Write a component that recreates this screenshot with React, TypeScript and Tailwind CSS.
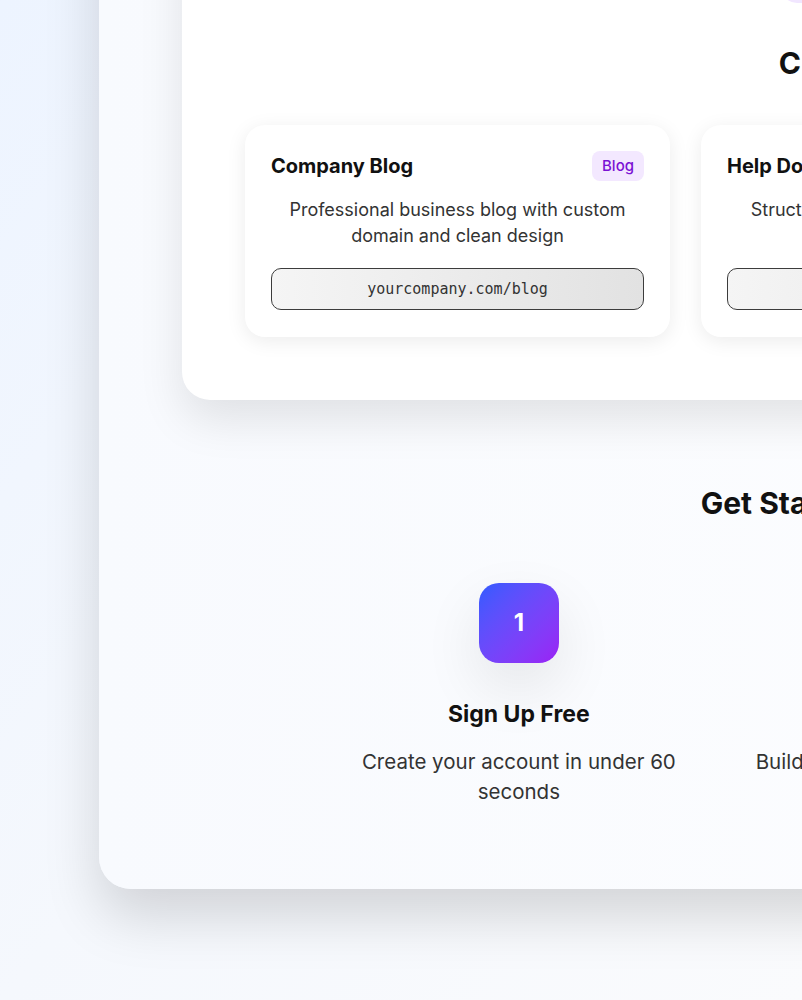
import React from 'react';

type Template = { title: string; tag: string; desc: string; url: string };
type Step = { num: number; title: string; desc: string };

const templates: Template[] = [
  {
    title: 'Company Blog',
    tag: 'Blog',
    desc: 'Professional business blog with custom domain and clean design',
    url: 'yourcompany.com/blog',
  },
  {
    title: 'Help Docs',
    tag: 'Docs',
    desc: 'Structured documentation with search functionality',
    url: 'docs.yourcompany.com',
  },
  {
    title: 'Portfolio',
    tag: 'Portfolio',
    desc: 'Showcase your work with a stunning personal portfolio',
    url: 'yourname.com',
  },
];

const steps: Step[] = [
  { num: 1, title: 'Sign Up Free', desc: 'Create your account in under 60 seconds' },
  { num: 2, title: 'Build It', desc: 'Build your website with powerful design tools' },
  { num: 3, title: 'Go Live', desc: 'Publish instantly and share it with the world' },
];

const TemplateCard = ({ item }: { item: Template }) => (
  <div className="flex flex-col rounded-[20px] bg-white p-[26px] pb-[27px] shadow-[0_4px_20px_rgba(0,0,0,0.08)]">
    <div className="flex items-center justify-between">
      <h3 className="text-xl font-bold text-[#111]">{item.title}</h3>
      <span className="rounded-lg bg-[#f3e8ff] px-2.5 py-1 text-[15px] leading-[22px] font-medium text-[#7a12d4]">
        {item.tag}
      </span>
    </div>
    <p className="mt-4 text-center text-lg leading-[26px] text-[#333]">{item.desc}</p>
    <div className="mt-[19px] rounded-[10px] border border-[#3c3c3c] bg-gradient-to-r from-[#f5f5f5] to-[#e2e2e2] py-[9px] text-center font-['DejaVu_Sans_Mono',monospace] text-[15px] leading-[22px] text-[#333]">
      {item.url}
    </div>
  </div>
);

const StepItem = ({ step }: { step: Step }) => (
  <div className="flex flex-col items-center text-center">
    <div className="flex h-20 w-20 items-center justify-center rounded-[20px] bg-gradient-to-br from-[#2d5bff] to-[#9a1ff5] text-2xl font-bold text-white shadow-[0_24px_60px_rgba(0,0,0,0.09)]">
      {step.num}
    </div>
    <h3 className="mt-[35px] text-[23px] leading-8 font-bold text-[#111]">{step.title}</h3>
    <p className="mt-[17px] text-[20.5px] leading-[30px] text-[#333]">{step.desc}</p>
  </div>
);

export default function App() {
  return (
    <div className="flex h-[1000px] w-full flex-col items-start overflow-hidden bg-gradient-to-br from-[#edf4ff] via-[#f5f8fd] to-[#fafbfd] font-['Inter',sans-serif]">
      <div className="-mt-[175px] ml-[99px] w-[1629px] shrink-0 rounded-[32px] bg-gradient-to-r from-[#f8fafe] to-white p-[83px] pb-[82px] shadow-[0_28px_55px_rgba(0,0,0,0.15)]">
        {/* templates */}
        <div className="flex flex-col items-center rounded-[28px] bg-white p-[63px] shadow-[0_20px_45px_rgba(0,0,0,0.1)]">
          <span className="flex h-8 w-[266px] items-center justify-center rounded-full bg-[#f1e6ff] text-sm font-medium text-[#7a12d4]">
            Perfect for every use case
          </span>
          <h2 className="mt-[42px] text-3xl font-bold text-[#111]">Create Every Page</h2>
          <div className="mt-[44px] grid w-full grid-cols-3 gap-[31px]">
            {templates.map((t) => (
              <TemplateCard key={t.title} item={t} />
            ))}
          </div>
        </div>

        {/* steps */}
        <h2 className="mt-[85px] text-center text-3xl font-bold text-[#111]">Get Started in 3 Simple Steps</h2>
        <div className="mx-auto mt-[62px] grid max-w-6xl grid-cols-3 gap-8">
          {steps.map((s) => (
            <StepItem key={s.num} step={s} />
          ))}
        </div>
      </div>
    </div>
  );
}
